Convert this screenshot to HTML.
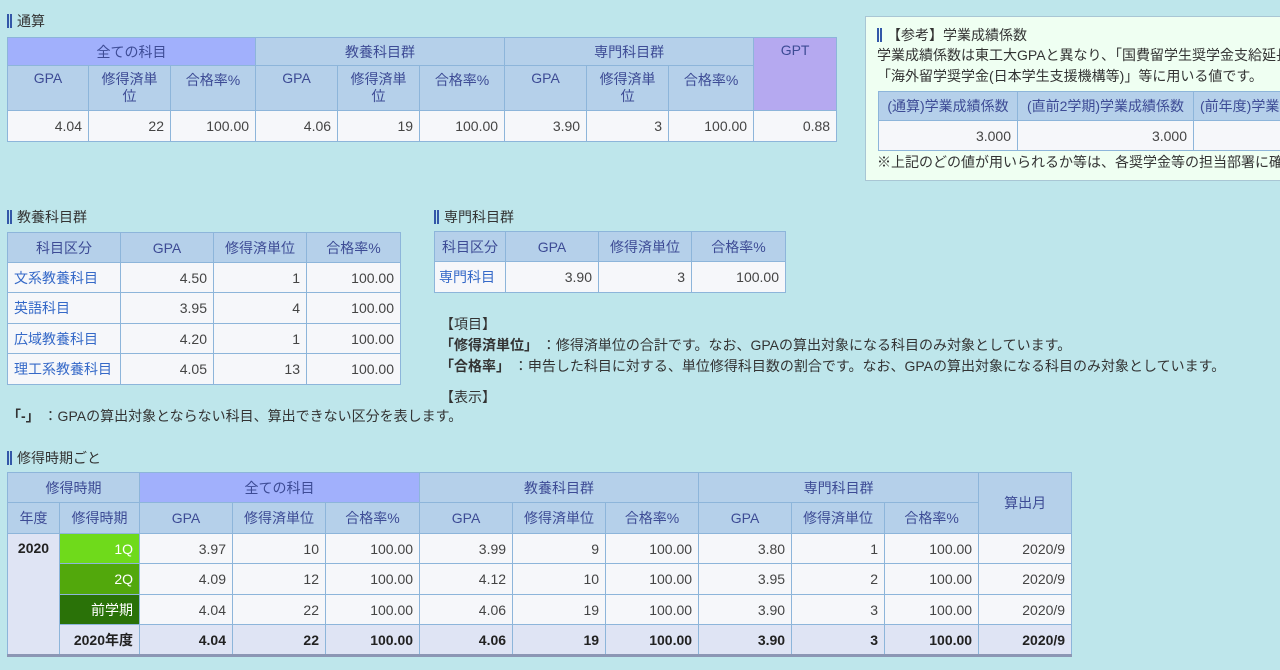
<!DOCTYPE html>
<html><head><meta charset="utf-8"><style>
body{margin:0;width:1280px;height:670px;overflow:hidden;background:#bee6eb;font-family:"Liberation Sans","Noto Sans CJK JP",sans-serif;font-size:14px;color:#333;position:relative}
.a{position:absolute}
.t{border-collapse:collapse;table-layout:fixed;position:absolute}
.t td,.t th{border:1px solid #8db5da;padding:0 6px;font-weight:normal;white-space:nowrap;overflow:hidden}
.t th{background:#b5d0ea;color:#3d4b95;text-align:center}
.t th.p{background:#a1b0fc}
.t th.g{background:#b5a9f0}
.t td{background:#f6f7fa;text-align:right;color:#444}
.h{position:absolute;font-size:14px;color:#333;padding-left:10px}
.h:before{content:"";position:absolute;left:0;top:3px;height:14px;border-left:2px solid #3357a8;border-right:2px solid #3357a8;width:1px}
.lk{color:#3569c8!important;text-align:left!important}
.b td{background:#dfe4f4;font-weight:bold;color:#222}
</style></head><body>

<div class="h" style="left:7px;top:11px">通算</div>
<table class="t" style="left:7px;top:37px;width:829px">
<colgroup><col style="width:81px"><col style="width:82px"><col style="width:85px"><col style="width:82px"><col style="width:82px"><col style="width:85px"><col style="width:82px"><col style="width:82px"><col style="width:85px"><col style="width:83px"></colgroup>
<tr style="height:28px"><th class="p" colspan="3">全ての科目</th><th colspan="3">教養科目群</th><th colspan="3">専門科目群</th><th class="g" rowspan="2" style="vertical-align:top;padding-top:4px">GPT</th></tr>
<tr style="height:45px"><th style="vertical-align:top;padding-top:4px">GPA</th><th style="white-space:normal;line-height:17px">修得済単位</th><th style="vertical-align:top;padding-top:4px">合格率%</th><th style="vertical-align:top;padding-top:4px">GPA</th><th style="white-space:normal;line-height:17px">修得済単位</th><th style="vertical-align:top;padding-top:4px">合格率%</th><th style="vertical-align:top;padding-top:4px">GPA</th><th style="white-space:normal;line-height:17px">修得済単位</th><th style="vertical-align:top;padding-top:4px">合格率%</th></tr>
<tr style="height:31px"><td>4.04</td><td>22</td><td>100.00</td><td>4.06</td><td>19</td><td>100.00</td><td>3.90</td><td>3</td><td>100.00</td><td>0.88</td></tr>
</table>

<div class="a" style="left:865px;top:16px;width:430px;height:163px;background:#effff2;border:1px solid #a9c6d4"></div>
<div class="h" style="left:877px;top:25px">【参考】学業成績係数</div>
<div class="a" style="left:877px;top:45px;line-height:21px;white-space:nowrap">学業成績係数は東工大GPAと異なり、「国費留学生奨学金支給延長<br>「海外留学奨学金(日本学生支援機構等)」等に用いる値です。</div>
<table class="t" style="left:878px;top:91px;width:520px">
<colgroup><col style="width:139px"><col style="width:176px"><col style="width:205px"></colgroup>
<tr style="height:29px"><th>(通算)学業成績係数</th><th>(直前2学期)学業成績係数</th><th style="text-align:left">(前年度)学業成績係数</th></tr>
<tr style="height:30px"><td>3.000</td><td>3.000</td><td></td></tr>
</table>
<div class="a" style="left:877px;top:152px;white-space:nowrap">※上記のどの値が用いられるか等は、各奨学金等の担当部署に確認</div>

<div class="h" style="left:7px;top:207px">教養科目群</div>
<table class="t" style="left:7px;top:232px;width:393px">
<colgroup><col style="width:113px"><col style="width:93px"><col style="width:93px"><col style="width:94px"></colgroup>
<tr style="height:30px"><th>科目区分</th><th>GPA</th><th>修得済単位</th><th>合格率%</th></tr>
<tr style="height:30px"><td class="lk">文系教養科目</td><td>4.50</td><td>1</td><td>100.00</td></tr>
<tr style="height:31px"><td class="lk">英語科目</td><td>3.95</td><td>4</td><td>100.00</td></tr>
<tr style="height:30px"><td class="lk">広域教養科目</td><td>4.20</td><td>1</td><td>100.00</td></tr>
<tr style="height:31px"><td class="lk">理工系教養科目</td><td>4.05</td><td>13</td><td>100.00</td></tr>
</table>

<div class="h" style="left:434px;top:207px">専門科目群</div>
<table class="t" style="left:434px;top:231px;width:351px">
<colgroup><col style="width:71px"><col style="width:93px"><col style="width:93px"><col style="width:94px"></colgroup>
<tr style="height:30px"><th style="padding:0 4px">科目区分</th><th>GPA</th><th>修得済単位</th><th>合格率%</th></tr>
<tr style="height:31px"><td class="lk" style="padding:0 4px">専門科目</td><td>3.90</td><td>3</td><td>100.00</td></tr>
</table>

<div class="a" style="left:440px;top:314px;line-height:21px;white-space:nowrap">【項目】<br><b>「修得済単位」</b>&nbsp;：修得済単位の合計です。なお、GPAの算出対象になる科目のみ対象としています。<br><b>「合格率」</b>&nbsp;：申告した科目に対する、単位修得科目数の割合です。なお、GPAの算出対象になる科目のみ対象としています。</div>
<div class="a" style="left:440px;top:387px">【表示】</div>
<div class="a" style="left:7px;top:406px;white-space:nowrap"><b>「-」</b>&nbsp;：GPAの算出対象とならない科目、算出できない区分を表します。</div>

<div class="h" style="left:7px;top:448px">修得時期ごと</div>
<table class="t" style="left:7px;top:472px;width:1064px;border-bottom:3px solid #8c96b4">
<colgroup><col style="width:52px"><col style="width:80px"><col style="width:93px"><col style="width:93px"><col style="width:94px"><col style="width:93px"><col style="width:93px"><col style="width:93px"><col style="width:93px"><col style="width:93px"><col style="width:94px"><col style="width:93px"></colgroup>
<tr style="height:30px"><th colspan="2">修得時期</th><th class="p" colspan="3">全ての科目</th><th colspan="3">教養科目群</th><th colspan="3">専門科目群</th><th rowspan="2">算出月</th></tr>
<tr style="height:31px"><th style="padding:0">年度</th><th>修得時期</th><th>GPA</th><th>修得済単位</th><th>合格率%</th><th>GPA</th><th>修得済単位</th><th>合格率%</th><th>GPA</th><th>修得済単位</th><th>合格率%</th></tr>
<tr style="height:30px"><td rowspan="4" style="background:#dfe4f4;vertical-align:top;text-align:center;font-weight:bold;padding:6px 0 0;color:#222">2020</td><td style="background:#6fda1b;color:#fff">1Q</td><td>3.97</td><td>10</td><td>100.00</td><td>3.99</td><td>9</td><td>100.00</td><td>3.80</td><td>1</td><td>100.00</td><td>2020/9</td></tr>
<tr style="height:31px"><td style="background:#52a80c;color:#fff">2Q</td><td>4.09</td><td>12</td><td>100.00</td><td>4.12</td><td>10</td><td>100.00</td><td>3.95</td><td>2</td><td>100.00</td><td>2020/9</td></tr>
<tr style="height:30px"><td style="background:#2a7208;color:#fff">前学期</td><td>4.04</td><td>22</td><td>100.00</td><td>4.06</td><td>19</td><td>100.00</td><td>3.90</td><td>3</td><td>100.00</td><td>2020/9</td></tr>
<tr class="b" style="height:31px"><td>2020年度</td><td>4.04</td><td>22</td><td>100.00</td><td>4.06</td><td>19</td><td>100.00</td><td>3.90</td><td>3</td><td>100.00</td><td>2020/9</td></tr>
</table>
</body></html>
